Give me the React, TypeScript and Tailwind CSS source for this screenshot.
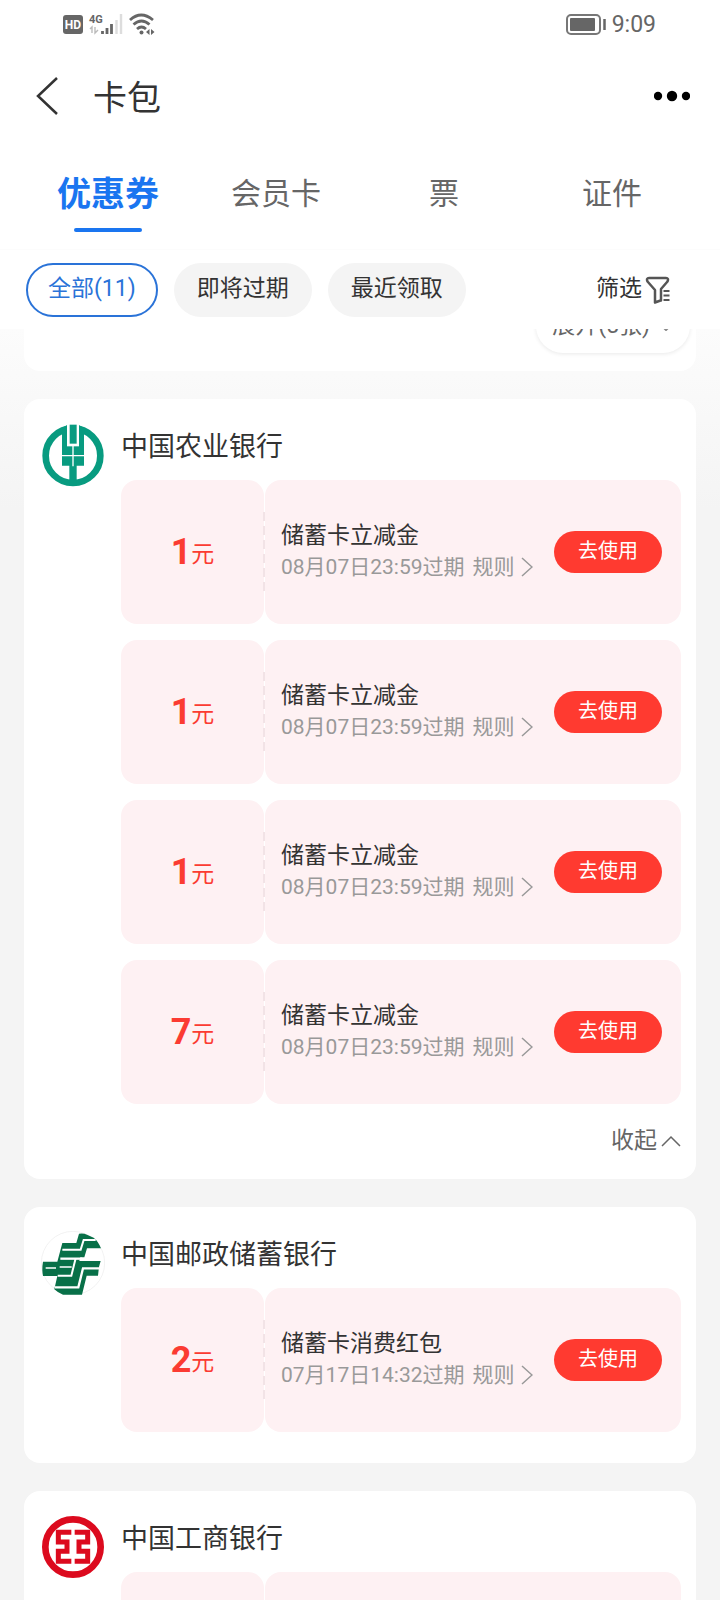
import type { ReactNode } from 'react'

type Coupon = {
  amount: number
  title: string
  expires: string
}

type Bank = {
  name: string
  logo: ReactNode
  coupons: Coupon[]
  expanded?: boolean
}

const tabs = ['优惠券', '会员卡', '票', '证件']
const filters = ['全部(11)', '即将过期', '最近领取']

function AbcLogo() {
  return (
    <svg viewBox="0 0 192 192" className="h-16 w-16" aria-hidden>
      <circle cx="96" cy="98" r="82" fill="none" stroke="#089b80" strokeWidth="20" />
      <path d="M78 0h36v60H78z" fill="#fff" />
      <path d="M63 14l15-7v50h36V7l15 7v114h-22v60H85v-60H63z" fill="#089b80" />
      <path d="M78 4h36v66H78z" fill="#fff" />
      <path d="M86 5h21v57H86z" fill="#089b80" />
      <path d="M60 98h72M96 68v62" stroke="#fff" strokeWidth="4" />
    </svg>
  )
}

function PsbcLogo() {
  return (
    <svg viewBox="0 0 192 192" className="h-16 w-16" aria-hidden>
      <circle cx="96" cy="96" r="95" fill="#fff" stroke="#ececec" strokeWidth="2" />
      <path
        d="M64 36h42l8-28q14-2 24 3l20 9q14 11 22 32h-42l-8 27h-12l-3 11h64l-5 17-3 27h-34l-14 57H66q-16-6-26-16l9-40H6q-4-20 0-43h43z"
        fill="#087048"
      />
      <g fill="none" stroke="#fff" strokeWidth="6">
        <path d="M64 56h55l9-29h36" />
        <path d="M58 83h64" strokeWidth="7" />
        <path d="M14 111h31M56 108h36" strokeWidth="5" />
        <path d="M104 82l-13 52H50" />
        <path d="M42 169h70l14-57h56" strokeWidth="7" />
      </g>
    </svg>
  )
}

function IcbcLogo() {
  return (
    <svg viewBox="0 0 192 192" className="h-16 w-16" aria-hidden>
      <circle cx="96" cy="96" r="83" fill="none" stroke="#dc0a1e" strokeWidth="20" />
      <path
        d="M91 52H52v29h26v28H52v30h39M101 52h39v29h-26v28h26v30h-39"
        fill="none"
        stroke="#dc0a1e"
        strokeWidth="15"
      />
    </svg>
  )
}

const banks: Bank[] = [
  {
    name: '中国农业银行',
    logo: <AbcLogo />,
    expanded: true,
    coupons: [
      { amount: 1, title: '储蓄卡立减金', expires: '08月07日23:59过期' },
      { amount: 1, title: '储蓄卡立减金', expires: '08月07日23:59过期' },
      { amount: 1, title: '储蓄卡立减金', expires: '08月07日23:59过期' },
      { amount: 7, title: '储蓄卡立减金', expires: '08月07日23:59过期' },
    ],
  },
  {
    name: '中国邮政储蓄银行',
    logo: <PsbcLogo />,
    coupons: [{ amount: 2, title: '储蓄卡消费红包', expires: '07月17日14:32过期' }],
  },
  {
    name: '中国工商银行',
    logo: <IcbcLogo />,
    coupons: [{ amount: 1, title: '储蓄卡立减金', expires: '08月07日23:59过期' }],
  },
]

function StatusBar() {
  return (
    <div className="flex h-12 items-center justify-between pt-0.5 pr-16 pl-[63px] text-[#666]">
      <svg viewBox="0 0 92 24" className="h-6 w-[92px]" aria-hidden>
        <rect x="0" y="2" width="20" height="19" rx="3" fill="#666" />
        <text x="10" y="16" fontSize="12" fontWeight="700" fill="#fff" textAnchor="middle" fontFamily="Roboto, sans-serif">
          HD
        </text>
        <text x="26" y="10" fontSize="11" fontWeight="700" fill="#666" fontFamily="Roboto, sans-serif">
          4G
        </text>
        <path d="M27 16l2-2v6M32 14v6l3-3" stroke="#bbb" strokeWidth="1.4" fill="none" />
        <path d="M39.5 21v-3M44 21v-6M48.5 21v-10" stroke="#666" strokeWidth="2.8" />
        <path d="M53.5 21v-14M58 21v-20" stroke="#ddd" strokeWidth="2.4" />
        <g fill="none" stroke="#666" strokeWidth="2.8">
          <path d="M67 7q11-10 23 0" />
          <path d="M70.5 11.5q8-7 16 0" />
          <path d="M74 16q4.5-4 9 0" />
        </g>
        <circle cx="78.5" cy="19.5" r="2" fill="#666" />
        <path d="M86.5 16v6l-3.5-3zM88 16v6l3.5-3z" fill="#666" />
      </svg>
      <div className="flex items-center gap-1.5">
        <svg viewBox="0 0 40 22" className="h-[22px] w-10" aria-hidden>
          <rect x="1" y="1" width="33" height="19" rx="4" fill="none" stroke="#777" strokeWidth="2" />
          <rect x="4" y="4" width="25" height="13" rx="1" fill="#666" />
          <path d="M38.5 5v11" stroke="#666" strokeWidth="2.5" />
        </svg>
        <span className="text-[23px] leading-7">9:09</span>
      </div>
    </div>
  )
}

function CouponRow({ coupon }: { coupon: Coupon }) {
  return (
    <li className="relative flex h-36 gap-px">
      <div className="flex w-[143px] items-end justify-center rounded-2xl bg-[#fef1f3] py-[46px] text-[#fb3b32]">
        <span className="text-4xl leading-[52px] font-bold">{coupon.amount}</span>
        <span className="pb-1.5 text-[23px] leading-[34px]">元</span>
      </div>
      <div className="flex min-w-0 flex-1 items-center justify-between rounded-2xl bg-[#fef1f3] pr-[19px] pl-4">
        <div>
          <h3 className="text-[23px] leading-[30px] text-[#333]">{coupon.title}</h3>
          <p className="flex items-center text-[21px] leading-8 text-[#999]">
            {coupon.expires}
            <a href="#rules" className="ml-2 flex items-center gap-1.5">
              规则
              <svg viewBox="0 0 12 20" className="h-5 w-3" fill="none" stroke="#999" strokeWidth="1.5" aria-hidden>
                <path d="M1 1l10 9-10 9" />
              </svg>
            </a>
          </p>
        </div>
        <button type="button" className="h-[42px] w-[108px] rounded-full bg-[#ff3a30] pb-0.5 text-xl text-white">
          去使用
        </button>
      </div>
      <div className="absolute top-8 left-[142px] flex flex-col gap-[5px]" aria-hidden>
        {[0, 1, 2, 3, 4, 5].map((dash) => (
          <span key={dash} className="h-[9px] w-0.5 bg-[#f2e3e6]" />
        ))}
      </div>
    </li>
  )
}

function BankCard({ bank }: { bank: Bank }) {
  return (
    <section className="flex rounded-2xl bg-white pr-[15px] pl-[17px]">
      <div className="w-20 shrink-0 pt-6">{bank.logo}</div>
      <div className="min-w-0 flex-1">
        <h2 className="pt-7 pb-[13px] text-[27px] leading-[40px] text-[#333]">{bank.name}</h2>
        <ul className="flex flex-col gap-4">
          {bank.coupons.map((coupon, i) => (
            <CouponRow key={i} coupon={coupon} />
          ))}
        </ul>
        {bank.expanded ? (
          <div className="flex h-[75px] justify-end">
            <button type="button" className="flex h-[74px] items-center gap-1 text-[23px] text-[#666]">
              收起
              <svg viewBox="0 0 20 12" className="h-3 w-5" fill="none" stroke="#666" strokeWidth="1.5" aria-hidden>
                <path d="M1 11l9-9 9 9" />
              </svg>
            </button>
          </div>
        ) : (
          <div className="h-[31px]" />
        )}
      </div>
    </section>
  )
}

export default function App() {
  return (
    <div className="flex h-screen flex-col overflow-hidden bg-[#f4f4f4] font-[Roboto,'Noto_Sans_CJK_SC',sans-serif]">
      <header className="shrink-0 bg-white">
        <StatusBar />

        <div className="flex h-24 items-center justify-between pr-[30px] pl-[35px]">
          <div className="flex items-center gap-[34px]">
            <button type="button" aria-label="返回">
              <svg viewBox="0 0 24 38" className="h-[38px] w-6" fill="none" stroke="#333" strokeWidth="2.5" aria-hidden>
                <path d="M22 1L3 19l19 18" />
              </svg>
            </button>
            <h1 className="pt-1 text-[34px] leading-10 text-[#333]">卡包</h1>
          </div>
          <button type="button" aria-label="更多">
            <svg viewBox="0 0 36 12" className="h-3 w-9" aria-hidden>
              <circle cx="4" cy="6" r="4.2" />
              <circle cx="18" cy="6" r="5.2" />
              <circle cx="32" cy="6" r="4.2" />
            </svg>
          </button>
        </div>

        <nav className="grid h-[106px] grid-cols-4 border-b border-[#fcfcfc] px-6 pt-7">
          {tabs.map((tab, i) => (
            <a
              key={tab}
              href={`#tab-${i}`}
              className={
                i === 0
                  ? 'flex flex-col items-center text-[34px] leading-[44px] font-bold text-[#1a75f0]'
                  : 'flex flex-col items-center text-[30px] leading-[44px] text-[#666]'
              }
            >
              {tab}
              {i === 0 ? <span className="mt-3 h-1 w-[68px] rounded-full bg-[#1a75f0]" /> : null}
            </a>
          ))}
        </nav>

        <div className="flex h-[79px] items-center justify-between pr-[50px] pl-[26px]">
          <div className="flex gap-4">
            {filters.map((filter, i) => (
              <button
                key={filter}
                type="button"
                className={
                  i === 0
                    ? 'h-[54px] rounded-full border-2 border-[#2a73d8] px-5 text-[23px] text-[#2a73d8]'
                    : 'h-[54px] rounded-full bg-[#f4f4f4] px-[23px] text-[23px] text-[#333]'
                }
              >
                {filter}
              </button>
            ))}
          </div>
          <button type="button" className="flex items-center gap-[3px] text-[23px] text-[#333]">
            筛选
            <svg viewBox="0 0 25 28" className="h-7 w-[25px]" fill="none" stroke="#555" strokeWidth="2.5" aria-hidden>
              <path d="M15.5 24.5L10 26.5V14L2.5 5.5Q1 2 4 2h17q3 0 1.500 3.500L16 13v11.500z" strokeLinejoin="round" />
              <path d="M18.5 15h6M18.5 19.500h6M18.5 24h6" strokeWidth="2" />
            </svg>
          </button>
        </div>
      </header>

      <main className="min-h-0 flex-1 overflow-hidden bg-[linear-gradient(#fcfcfc,#f4f4f4_180px)] px-6">
        <div className="-mt-12 mb-7 flex justify-end rounded-b-2xl bg-white pt-[18px] pr-1.5 pb-[18px]">
          <button
            type="button"
            className="flex h-[54px] items-center gap-2 rounded-full bg-white px-4 text-[23px] text-[#666] shadow-[0_1px_4px_rgba(0,0,0,0.09)]"
          >
            展开(5张)
            <svg viewBox="0 0 16 10" className="h-2.5 w-4" fill="none" stroke="#888" strokeWidth="2" aria-hidden>
              <path d="M1 2l7 7 7-7" />
            </svg>
          </button>
        </div>

        <div className="flex flex-col gap-7">
          {banks.map((bank) => (
            <BankCard key={bank.name} bank={bank} />
          ))}
        </div>
      </main>
    </div>
  )
}
